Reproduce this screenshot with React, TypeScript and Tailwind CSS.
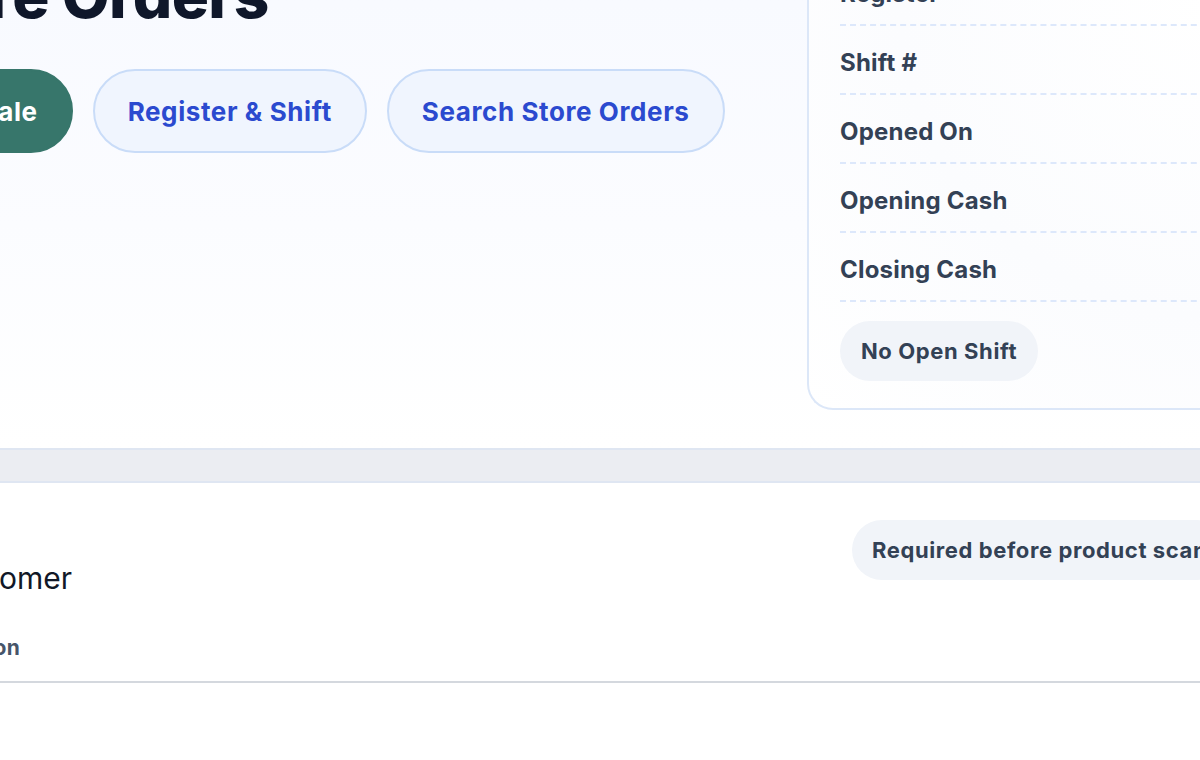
import React from "react";

const shiftRows = ["Register", "Shift #", "Opened On", "Opening Cash", "Closing Cash"];

function PillButton({ label, primary }: { label: string; primary?: boolean }) {
  return (
    <button
      className={
        primary
          ? "h-[84px] shrink-0 rounded-full border-2 border-[#37766b] bg-[#37766b] px-[33px] text-[26px] font-bold tracking-[0.6px] text-white"
          : "h-[84px] shrink-0 rounded-full border-2 border-[#c9dcf8] bg-[#f0f5fe] px-[33px] text-[26px] font-bold tracking-[0.6px] text-[#2b4acf]"
      }
    >
      {label}
    </button>
  );
}

function ShiftCard() {
  return (
    <aside className="mr-[-87px] mt-[-72px] w-[480px] shrink-0 self-start rounded-bl-[26px] border-2 border-t-0 border-r-0 border-[#dce7f8] bg-[radial-gradient(circle_at_85%_15%,#ffffff,#fbfcfe_55%,#ffffff)] pl-[31px] pt-[29px] pb-[27px]">
      <dl>
        {shiftRows.map((row) => (
          <div
            key={row}
            className="flex h-[69px] items-center border-b-2 border-dashed border-[#dde8fb] pt-[7px]"
          >
            <dt className="text-[24px] font-bold leading-7 tracking-[0.2px] text-[#334155]">{row}</dt>
          </div>
        ))}
      </dl>
      <span className="mt-[19px] inline-flex h-[60px] items-center rounded-full bg-[#f1f4f9] px-[21px] text-[22px] font-bold tracking-[0.6px] text-[#334155]">
        No Open Shift
      </span>
    </aside>
  );
}

export default function App() {
  return (
    <div className="h-[760px] w-[1200px] overflow-hidden bg-white font-['Inter','Noto_Sans',sans-serif]">
      {/* Header / actions */}
      <section className="flex h-[448px] justify-between bg-linear-to-b from-[#f8faff] via-[#fbfcff] to-white">
        <div className="ml-[-120px] mt-[-38px] flex flex-col">
          <h1 className="ml-[8px] text-[62px] font-extrabold leading-[1.1] tracking-[-0.01em] text-[#0f172a]">
            Store Orders
          </h1>
          <div className="mt-[39px] flex gap-5">
            <PillButton label="New Sale" primary />
            <PillButton label="Register & Shift" />
            <PillButton label="Search Store Orders" />
          </div>
        </div>
        <ShiftCard />
      </section>

      {/* Divider band */}
      <div className="h-[35px] border-y-2 border-[#dfe6f2] bg-[#ebedf2]" />

      {/* Customer step */}
      <section className="flex border-b-2 border-[#d4d8de] pt-[37px] pb-[19px]">
        <div className="ml-[-120px] mt-[40px] flex w-[972px] shrink-0 flex-col">
          <h2 className="ml-[54px] text-[30px] font-normal leading-9 text-[#111827]">Customer</h2>
          <p className="ml-[-69px] mt-[38px] text-[21px] font-bold leading-7 tracking-[0.4px] text-[#475569]">
            Customer Selection
          </p>
        </div>
        <span className="inline-flex h-[60px] shrink-0 items-center self-start rounded-full bg-[#f1f4f9] px-[20px] text-[22px] font-bold tracking-[0.6px] text-[#334155]">
          Required before product scan
        </span>
      </section>
    </div>
  );
}
